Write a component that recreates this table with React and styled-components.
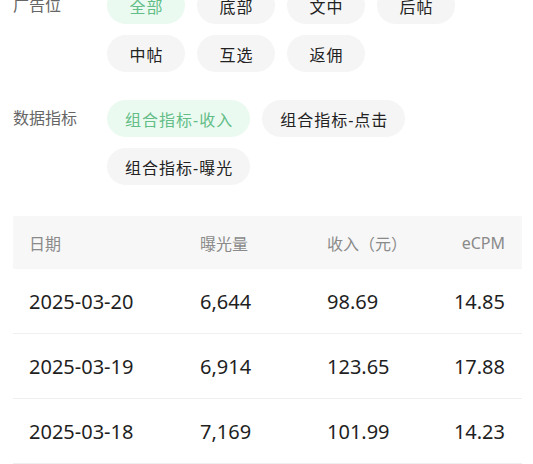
import styled, { createGlobalStyle } from 'styled-components';

const GlobalStyle = createGlobalStyle`
	html, body {
		margin: 0;
		padding: 0;
		background: #ffffff;
		overflow: hidden;
	}
	body {
		font-family: "Noto Sans", "Noto Sans CJK SC", sans-serif;
		color: #1f1f1f;
	}
`;

const placements = ['全部', '底部', '文中', '后帖', '中帖', '互选', '返佣'];
const metrics = ['组合指标-收入', '组合指标-点击', '组合指标-曝光'];

const rows = [
	{ date: '2025-03-20', views: '6,644', income: '98.69', ecpm: '14.85' },
	{ date: '2025-03-19', views: '6,914', income: '123.65', ecpm: '17.88' },
	{ date: '2025-03-18', views: '7,169', income: '101.99', ecpm: '14.23' },
];

const App = () => {
	return (
		<Page>
			<GlobalStyle />
			<FilterSection $top={-13}>
				<FilterLabel>广告位</FilterLabel>
				<ChipList>
					{placements.map((name, i) => (
						<Chip key={name} $active={i === 0}>
							{name}
						</Chip>
					))}
				</ChipList>
			</FilterSection>
			<FilterSection $top={28}>
				<FilterLabel>数据指标</FilterLabel>
				<ChipList>
					{metrics.map((name, i) => (
						<Chip key={name} $active={i === 0}>
							{name}
						</Chip>
					))}
				</ChipList>
			</FilterSection>
			<Table>
				<HeaderRow>
					<Cell>日期</Cell>
					<Cell>曝光量</Cell>
					<Cell>收入（元）</Cell>
					<Cell $right>eCPM</Cell>
				</HeaderRow>
				{rows.map((row) => (
					<DataRow key={row.date}>
						<Cell>{row.date}</Cell>
						<Cell>{row.views}</Cell>
						<Cell>{row.income}</Cell>
						<Cell $right>{row.ecpm}</Cell>
					</DataRow>
				))}
			</Table>
		</Page>
	);
};

const Page = styled.div`
	width: 533px;
	height: 464px;
	overflow: hidden;
	padding: 0 11px 0 13px;
	box-sizing: border-box;
`;

const FilterSection = styled.div`
	display: flex;
	align-items: flex-start;
	margin-top: ${(p) => p.$top}px;
`;

const FilterLabel = styled.div`
	width: 94px;
	flex-shrink: 0;
	height: 37px;
	line-height: 37px;
	font-size: 16px;
	color: #666666;
`;

const ChipList = styled.div`
	display: flex;
	flex-wrap: wrap;
	gap: 11px 12px;
	width: 360px;
`;

const Chip = styled.div`
	min-width: 78px;
	height: 37px;
	padding: 0 17px 0 18px;
	box-sizing: border-box;
	border-radius: 19px;
	display: flex;
	align-items: center;
	justify-content: center;
	font-size: 16px;
	letter-spacing: 1px;
	background-color: ${(p) => (p.$active ? '#ebfaf0' : '#f5f5f5')};
	color: ${(p) => (p.$active ? '#62bd87' : '#222222')};
`;

const Table = styled.div`
	margin-top: 31px;
	width: 509px;
`;

const HeaderRow = styled.div`
	display: grid;
	grid-template-columns: 171px 127px 1fr auto;
	align-items: center;
	height: 53px;
	padding: 0 17px 0 16px;
	background-color: #f7f7f7;
	font-size: 16px;
	color: #8a8a8a;
`;

const DataRow = styled.div`
	display: grid;
	grid-template-columns: 171px 127px 1fr auto;
	align-items: center;
	height: 64px;
	padding: 0 17px 0 16px;
	border-bottom: 1px solid #efefef;
	font-size: 20px;
	color: #1f1f1f;
`;

const Cell = styled.div`
	text-align: ${(p) => (p.$right ? 'right' : 'left')};
	white-space: nowrap;
`;

export default App;
